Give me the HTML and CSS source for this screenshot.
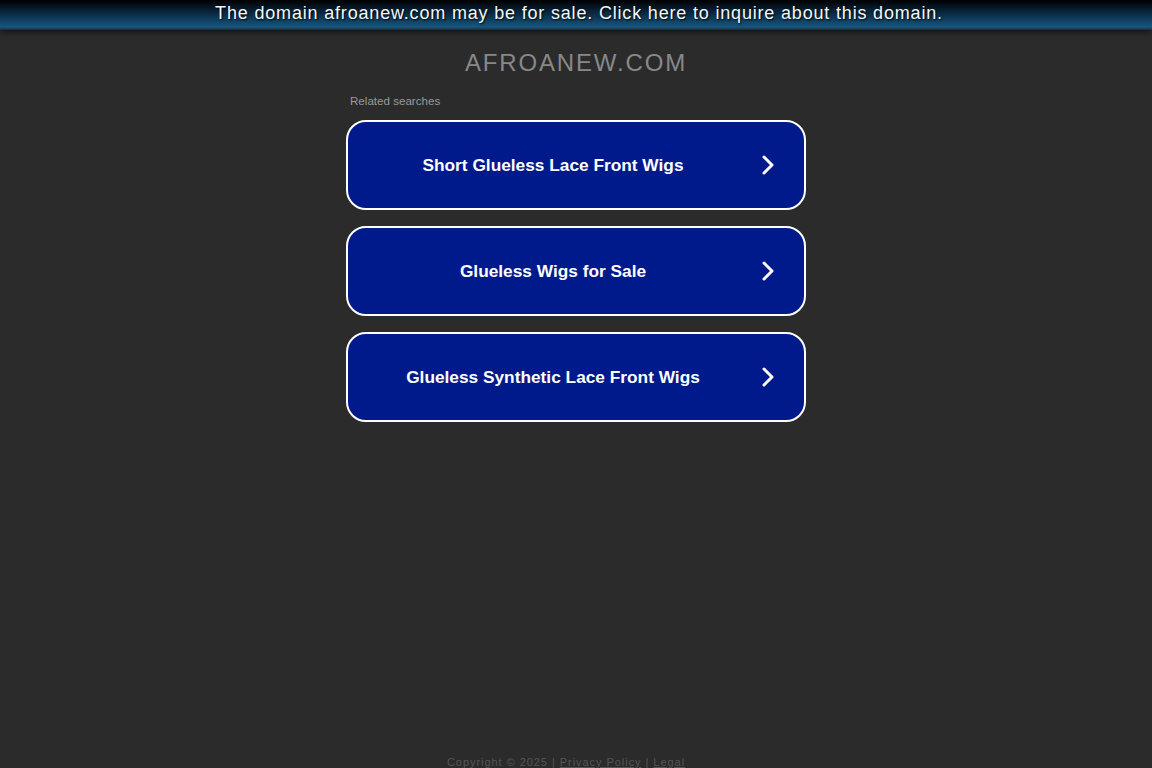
FILE: index.html
```html
<!DOCTYPE html>
<html>
<head>
<meta charset="utf-8">
<link rel="stylesheet" href="styles.css">
</head>
<body>
<div class="banner">The domain afroanew.com may be for sale. Click here to inquire about this domain.</div>
<div class="main">
  <h1 class="domain">AFROANEW.COM</h1>
  <div class="related">
    <div class="label">Related searches</div>
    <a class="item" href="#"><span class="text">Short Glueless Lace Front Wigs</span><svg class="arrow" width="14" height="22" viewBox="0 0 14 22"><path d="M3 3 L11 11 L3 19" fill="none" stroke="#fff" stroke-width="3" stroke-linecap="round" stroke-linejoin="round"/></svg></a>
    <a class="item" href="#"><span class="text">Glueless Wigs for Sale</span><svg class="arrow" width="14" height="22" viewBox="0 0 14 22"><path d="M3 3 L11 11 L3 19" fill="none" stroke="#fff" stroke-width="3" stroke-linecap="round" stroke-linejoin="round"/></svg></a>
    <a class="item" href="#"><span class="text">Glueless Synthetic Lace Front Wigs</span><svg class="arrow" width="14" height="22" viewBox="0 0 14 22"><path d="M3 3 L11 11 L3 19" fill="none" stroke="#fff" stroke-width="3" stroke-linecap="round" stroke-linejoin="round"/></svg></a>
  </div>
</div>
<div class="footer">Copyright © 2025 | <a href="#">Privacy Policy</a> | <a href="#">Legal</a></div>
</body>
</html>
```
FILE: styles.css
```css
html, body {
  margin: 0;
  padding: 0;
  height: 100%;
}
body {
  background: #2b2b2b;
  font-family: "Liberation Sans", Arial, sans-serif;
  display: flex;
  flex-direction: column;
  min-height: 768px;
}
.banner {
  height: 30px;
  line-height: 27px;
  text-align: center;
  color: #f4f8fa;
  font-size: 18px;
  letter-spacing: 0.82px;
  padding-left: 6px;
  text-shadow: 1px 1px 2px #000;
  background: linear-gradient(to bottom, #000 0%, #0a2a44 45%, #16567e 90%, #1f2a33 100%);
  box-shadow: 0 2px 6px rgba(0,0,0,0.6);
  flex: none;
}
.main {
  flex: 1;
  display: flex;
  flex-direction: column;
  align-items: center;
}
.domain {
  margin: 19px 0 0;
  font-size: 24px;
  font-weight: normal;
  letter-spacing: 1.85px;
  color: #888;
  line-height: 28px;
}
.related {
  width: 460px;
  margin-top: 17px;
  display: flex;
  flex-direction: column;
  gap: 16px;
}
.label {
  font-size: 11.6px;
  color: #9a9a9a;
  padding-left: 4px;
  margin-bottom: -4px;
  line-height: 14px;
}
.item {
  box-sizing: border-box;
  height: 90px;
  border: 2px solid #fff;
  border-radius: 20px;
  background: #001a8b;
  display: flex;
  align-items: center;
  justify-content: center;
  position: relative;
  text-decoration: none;
  color: #fff;
}
.text {
  font-size: 17.3px;
  font-weight: bold;
  margin-left: -46px;
}
.arrow {
  position: absolute;
  right: 29px;
  top: 32px;
}
.footer {
  flex: none;
  text-align: center;
  font-size: 11px;
  letter-spacing: 0.95px;
  color: #555;
  height: 14px;
  line-height: 14px;
  margin-bottom: -1px;
  padding-right: 20px;
}
.footer a {
  color: #555;
}
```
